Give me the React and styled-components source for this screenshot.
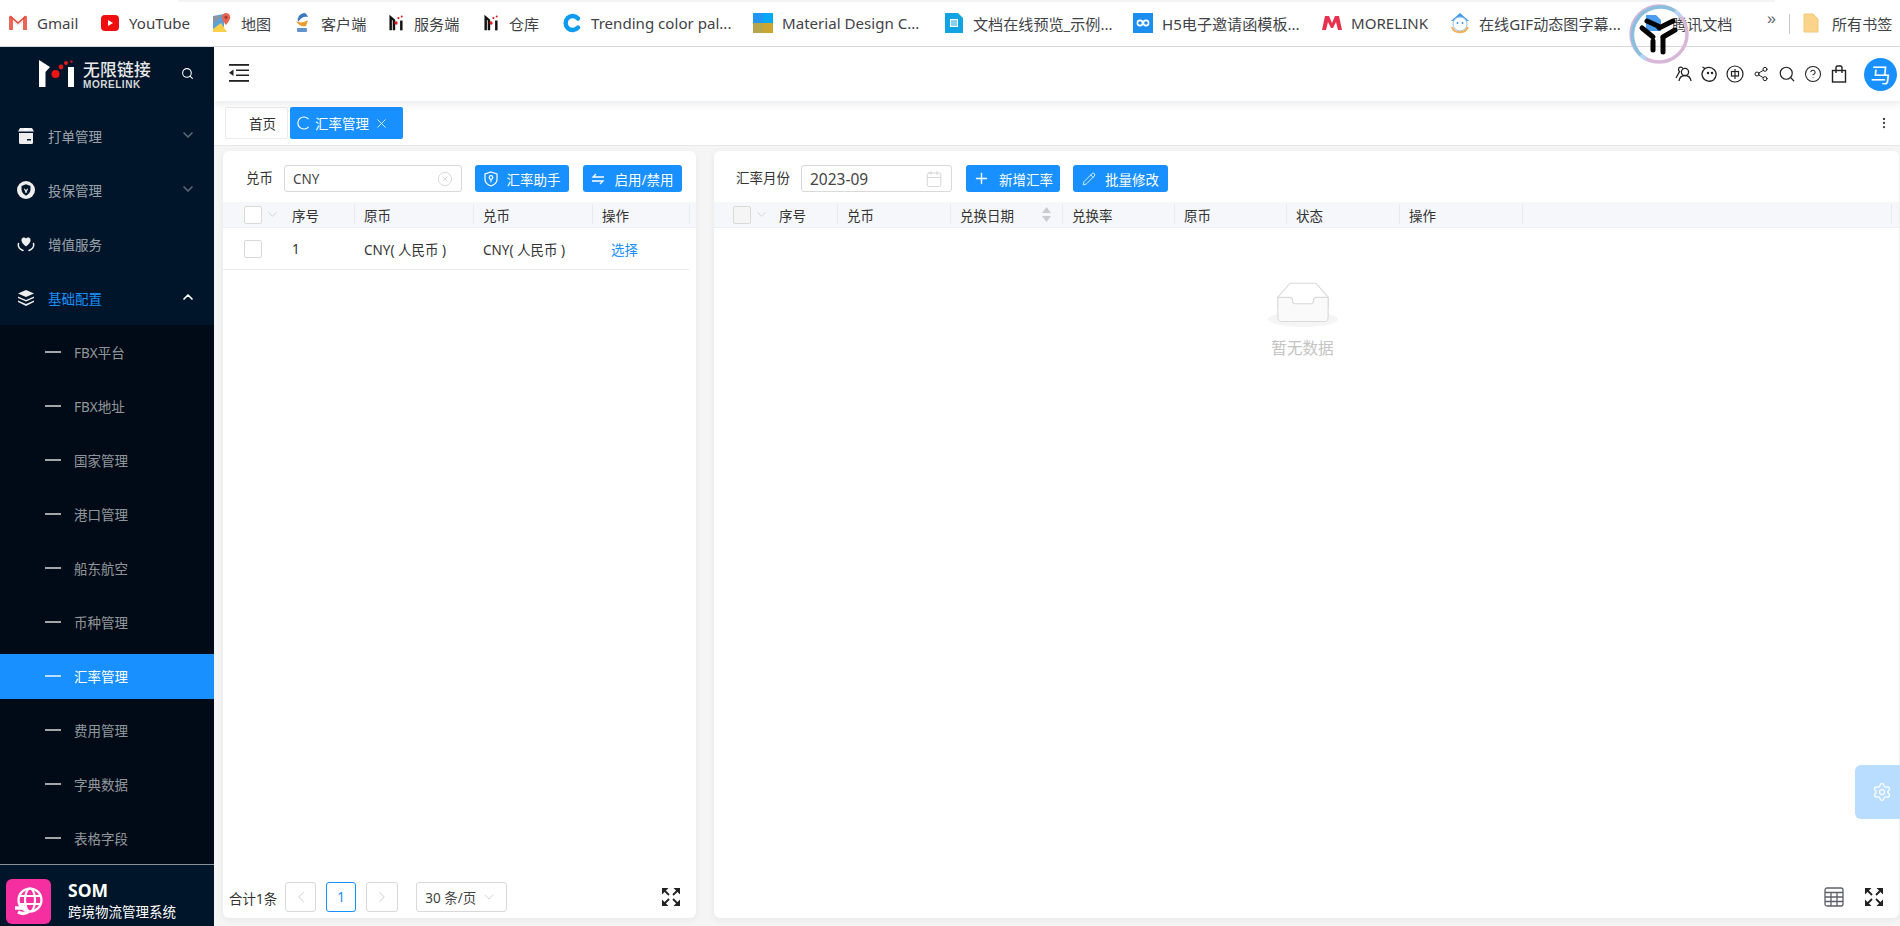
import React from 'react';
import styled, { createGlobalStyle } from 'styled-components';
import { Search, ChevronDown, ChevronUp, ChevronLeft, ChevronRight, X, Plus, Pencil, Calendar, Share2, CircleHelp, Settings, MoreVertical, XCircle } from 'lucide-react';

const FONT = `"Noto Sans", "Noto Sans CJK SC", sans-serif`;

const Global = createGlobalStyle`
  html, body { margin: 0; padding: 0; height: 100%; overflow: hidden; background: #fff; }
  #root { height: 100%; }
  * { box-sizing: border-box; }
  body { font-family: ${FONT}; font-size: 13.5px; color: #333; }
`;

const Page = styled.div`
  height: 926px; width: 1900px; display: flex; flex-direction: column; position: relative; overflow: hidden;
`;

/* ---------- bookmarks ---------- */
const BookmarkBar = styled.div`
  height: 47px; flex: none; display: flex; align-items: center; gap: 22px; padding: 0 0 0 8px;
  border-bottom: 1px solid #dadce0; background: #fff; position: relative;
  &::before { content: ''; position: absolute; left: 178px; width: 1597px; top: 0; height: 2px; background: #f1f3f4; border-radius: 0 0 6px 6px; }
`;
const Bookmark = styled.div`
  display: flex; align-items: center; gap: 9px; white-space: nowrap; font-size: 15.1px; color: #3f4347; flex: none;
  width: ${p => p.$w}px;
  svg { flex: none; }
`;
const Chevrons = styled.span`
  position: absolute; left: 1767px; top: 10px; font-size: 16px; color: #5f6368; font-family: "Liberation Sans", sans-serif;
`;
const BarDivider = styled.span`
  position: absolute; left: 1789px; top: 14px; height: 20px; width: 1px; background: #c7c9cc;
`;
const AllBookmarks = styled(Bookmark)`
  position: absolute; left: 1803px; top: 12px; gap: 13px;
`;
const FloatingRing = styled.svg`
  position: absolute; left: 1629px; top: 4px; z-index: 5;
`;

/* ---------- shell ---------- */
const Shell = styled.div`
  flex: 1; min-height: 0; display: flex;
`;
const Sidebar = styled.aside`
  width: 214px; flex: none; display: flex; flex-direction: column; background: #001529;
`;
const LogoRow = styled.div`
  height: 62px; flex: none; padding: 13px 0 0 39px; display: flex; align-items: flex-start; position: relative;
`;
const LogoText = styled.div`
  margin-left: 8px; display: flex; flex-direction: column; color: #e8e8e8;
`;
const LogoCn = styled.div`
  font-size: 16.8px; line-height: 18px; letter-spacing: 0.2px; font-weight: 500; font-family: "Noto Sans CJK SC", sans-serif;
`;
const LogoEn = styled.div`
  font-size: 10px; line-height: 11px; margin-top: 1px; font-weight: 700; letter-spacing: 0.55px; color: #d5d7da; font-family: "Liberation Sans", sans-serif;
`;
const LogoSearch = styled.span`
  position: absolute; left: 181px; top: 20px; color: #fff; display: flex;
`;
const MenuItem = styled.div`
  height: 54px; flex: none; display: flex; align-items: center; padding: 0 18px 0 17px; gap: 13px;
  color: ${p => (p.$active ? '#1890ff' : 'rgba(255,255,255,.62)')}; font-size: 13.5px;
`;
const MenuIcon = styled.span`
  width: 18px; height: 18px; display: flex; align-items: center; justify-content: center; flex: none;
`;
const MenuLabel = styled.span`
  flex: 1;
`;
const MenuArrow = styled.span`
  display: flex; color: ${p => (p.$open ? '#fff' : 'rgba(255,255,255,.35)')}; margin-top: -3px;
`;
const SubMenu = styled.div`
  flex: 1; min-height: 0; overflow: hidden; background: #000b17; padding-top: 5px; display: flex; flex-direction: column; gap: 9px;
`;
const SubItem = styled.div`
  height: 45px; flex: none; display: flex; align-items: center; padding: 0 0 2px 45px; gap: 13px; font-size: 13.5px;
  background: ${p => (p.$active ? '#1890ff' : 'transparent')};
  color: ${p => (p.$active ? '#fff' : 'rgba(255,255,255,.58)')};
`;
const Dash = styled.span`
  width: 16px; height: 2px; flex: none; background: ${p => (p.$active ? '#b9dcff' : '#a3a6a9')};
`;
const SideFooter = styled.div`
  height: 62px; flex: none; border-top: 1px solid #8b9096; display: flex; gap: 17px; padding: 14px 0 0 6px; background: #001529;
`;
const AppBadge = styled.div`
  width: 45px; height: 45px; border-radius: 6px; background: #f52f9f; display: flex; align-items: center; justify-content: center; flex: none;
`;
const AppText = styled.div`
  display: flex; flex-direction: column; color: #fff;
`;
const AppName = styled.div`
  font-size: 17.5px; font-weight: 700; line-height: 22px;
`;
const AppDesc = styled.div`
  font-size: 13.5px; line-height: 24px; margin-top: -1px;
`;

/* ---------- main ---------- */
const Main = styled.main`
  flex: 1; min-width: 0; display: flex; flex-direction: column; background: #f5f5f5;
`;
const TopBar = styled.header`
  height: 54px; flex: none; background: #fff; display: flex; align-items: center; padding: 0 3px 0 15px; position: relative; z-index: 1;
  box-shadow: 0 3px 8px rgba(0, 21, 41, 0.09);
`;
const ToggleWrap = styled.span`
  display: flex; margin-top: -2px;
`;
const Toolset = styled.div`
  margin-left: auto; display: flex; align-items: center; gap: 8px; color: #222; margin-right: 16px;
`;
const ToolIcon = styled.span`
  width: 18px; height: 18px; display: flex; align-items: center; justify-content: center;
`;
const Avatar = styled.div`
  width: 33px; height: 33px; border-radius: 50%; background: #1890ff; color: #fff; display: flex; align-items: center; justify-content: center; font-size: 20px; margin-top: 1px;
`;
const TabRow = styled.div`
  height: 45px; flex: none; background: #fff; border-bottom: 1px solid #e8e8e8; display: flex; align-items: flex-start; padding: 6px 10px 0 11px; gap: 2px;
`;
const HomeTab = styled.div`
  width: 63px; height: 32px; border: 1px solid #ececec; border-radius: 2px; display: flex; align-items: center; padding-left: 23px; color: #333;
`;
const ActiveTab = styled.div`
  width: 113px; height: 32px; background: #1890ff; border-radius: 2px; display: flex; align-items: center; padding: 0 7px; color: #fff; gap: 4px;
`;
const TabClose = styled.span`
  display: flex; margin-left: 1px;
`;
const TabMore = styled.span`
  margin-left: auto; display: flex; color: #444; margin-top: 9px; margin-right: -1px;
`;
const Content = styled.div`
  flex: 1; min-height: 0; display: flex; gap: 18px; padding: 5px 1px 8px 9px;
`;
const Panel = styled.section`
  width: ${p => (p.$w ? `${p.$w}px` : 'auto')}; flex: ${p => (p.$w ? 'none' : '1')}; min-width: 0;
  background: #fff; border-radius: 6px; box-shadow: 0 2px 7px rgba(0,0,0,.06); display: flex; flex-direction: column;
`;
const Toolbar = styled.div`
  height: 51px; flex: none; display: flex; align-items: flex-start; padding: 14px 0 0 ${p => p.$pad}px;
`;
const FieldLabel = styled.label`
  height: 27px; line-height: 27px; margin-right: 11px; color: #333; white-space: nowrap;
`;
const InputBox = styled.div`
  width: ${p => p.$w}px; height: 27px; border: 1px solid #d9d9d9; border-radius: 3px; display: flex; align-items: center; justify-content: space-between;
  padding: 0 8px 0 8px; font-size: ${p => p.$fs || 13.5}px; color: #444; margin-right: ${p => p.$mr}px;
  svg { color: #cfcfcf; }
`;
const ActionButton = styled.button`
  width: ${p => p.$w}px; height: 27px; border: 0; border-radius: 3px; background: #1890ff; color: #fff; font: inherit; font-size: 13.5px;
  display: flex; align-items: center; justify-content: center; gap: 9px; margin-right: ${p => p.$mr || 0}px; padding: 0;
`;
const TableHead = styled.div`
  height: 26px; flex: none; display: grid; grid-template-columns: ${p => p.$cols}; background: #f5f7fa; border-bottom: 1px solid #ebeef2; align-items: stretch;
`;
const HeadCell = styled.div`
  position: relative; display: flex; align-items: center; padding-left: ${p => (p.$bare ? 0 : 10)}px; color: #333; font-size: 13.5px; white-space: nowrap;
  ${p => p.$bare ? '' : `&::before { content: ''; position: absolute; left: 0; top: 2px; bottom: 3px; width: 1px; background: #e8eaee; }`}
`;
const SortedCell = styled(HeadCell)`
  justify-content: space-between; padding-right: 11px;
`;
const CheckCell = styled.div`
  display: flex; align-items: center; padding-left: ${p => p.$pad}px; gap: 3px; color: #c9c9c9;
`;
const CheckBox = styled.span`
  width: 18px; height: 18px; border: 1px solid #d9d9d9; border-radius: 2px; flex: none; background: ${p => (p.$off ? '#f5f5f5' : '#fff')};
`;
const TableRow = styled.div`
  height: 42px; flex: none; display: grid; grid-template-columns: ${p => p.$cols}; align-items: center; border-bottom: 1px solid #ebebeb; margin-right: 7px; color: #333;
`;
const RowCell = styled.div`
  padding-left: ${p => (p.$bare ? 0 : 10)}px; white-space: nowrap; font-size: 13.5px;
`;
const RowLink = styled.a`
  color: #1890ff; padding-left: 19px; font-size: 13.5px;
`;
const EmptyState = styled.div`
  width: 1177px; padding-top: 54px; display: flex; flex-direction: column; align-items: center;
`;
const EmptyText = styled.div`
  font-size: 15.6px; color: #c4c4c4; margin-top: 10px; line-height: 22px;
`;
const PanelFoot = styled.div`
  margin-top: auto; height: 36px; flex: none; display: flex; align-items: flex-start; padding: 0 15px 6px 6px;
`;
const Total = styled.span`
  line-height: 34px; margin-right: 8px; color: #333; white-space: nowrap;
`;
const PageBtn = styled.div`
  width: ${p => p.$w || 31}px; height: 30px; border: 1px solid ${p => (p.$on ? '#1890ff' : '#d9d9d9')}; border-radius: 3px; display: flex; align-items: center; justify-content: center;
  color: ${p => (p.$on ? '#1890ff' : '#c4c4c4')}; margin-right: 10px; background: #fff;
`;
const PageSelect = styled.div`
  width: 91px; height: 30px; border: 1px solid #d9d9d9; border-radius: 3px; margin-left: 8px; display: flex; align-items: center; gap: 5px; padding-left: 8px; color: #444;
  svg { color: #c4c4c4; }
`;
const FootIcons = styled.div`
  margin-left: auto; display: flex; gap: 20px; padding-top: 5px; color: #222;
`;
const GearTab = styled.div`
  position: absolute; right: 0; top: 765px; width: 45px; height: 54px; border-radius: 6px 0 0 6px; background: #b9ddff; display: flex; align-items: center; justify-content: center; color: #fff; padding-left: 9px; z-index: 3;
`;

/* ---------- drawings ---------- */
const IconM = ({ size = 18 }) => (
  <svg width={size} height={size} viewBox="0 0 20 22">
    <path d="M2 1 L9 7 V20 H6 V8 L5 7 V20 H2Z" fill="#111" />
    <rect x="15" y="8" width="3" height="12" fill="#111" />
    <circle cx="10" cy="11" r="2" fill="#e01818" />
    <circle cx="13" cy="5" r="1.3" fill="#e01818" />
    <circle cx="17" cy="3" r="1.2" fill="#e01818" />
  </svg>
);
const Bookmarks = [
  { t: 'Gmail', w: 70, i: <svg width="20" height="16" viewBox="0 0 20 16"><path d="M1 15V2l9 7 9-7v13h-4V7l-5 4-5-4v8z" fill="#e8e8e8" /><path d="M1 15V2.4C1 1 2.6.4 3.4 1.2L5 2.5V15z" fill="#e9665a" /><path d="M19 15V2.4C19 1 17.4.4 16.6 1.2L15 2.5V15z" fill="#e9665a" /><path d="M3 1l7 6 7-6 1 1-8 7-8-7z" fill="#ea4335" /></svg> },
  { t: 'YouTube', w: 90, i: <svg width="20" height="16" viewBox="0 0 20 16"><rect x="1" width="18" height="16" rx="4" fill="#f00f0f" /><path d="M8 5l5 3-5 3z" fill="#fff" /></svg> },
  { t: '地图', w: 58, i: <svg width="20" height="20" viewBox="0 0 20 20"><path d="M1 3l11-2v18H1z" fill="#5e9fd8" /><path d="M1 16l8-6 6 9H1z" fill="#fbd14b" /><path d="M1 3h8L1 11z" fill="#8a95a3" /><path d="M14 0a4.2 4.2 0 0 1 4.2 4.2C18.2 7 14 12 14 12S9.8 7 9.8 4.2A4.2 4.2 0 0 1 14 0z" fill="#e8664f" /><circle cx="14" cy="4.2" r="1.5" fill="#a33" /></svg> },
  { t: '客户端', w: 73, i: <svg width="20" height="22" viewBox="0 0 20 22"><path d="M12 1a7 7 0 0 0-6 9c3-5 7-6 10-5-1-2-2-4-4-4z" fill="#3c78c2" /><path d="M4 9c3 2 8 2 12-1l-2 6c-3 1-7 0-10-5z" fill="#ee9a2c" /><rect x="5" y="16" width="10" height="4" rx="1" fill="#3c78c2" opacity=".8" /></svg> },
  { t: '服务端', w: 73, i: <IconM /> },
  { t: '仓库', w: 58, i: <IconM /> },
  { t: 'Trending color pal...', w: 169, i: <svg width="20" height="20" viewBox="0 0 20 20"><path d="M16 5.5A7 7 0 1 0 16 14.5" fill="none" stroke="#0f9cf0" strokeWidth="4.4" strokeLinecap="round" /></svg> },
  { t: 'Material Design C...', w: 169, i: <svg width="20" height="20" viewBox="0 0 20 20"><rect width="10" height="10" fill="#2196f3" /><rect x="10" width="10" height="10" fill="#03a9f4" /><rect y="10" width="10" height="10" fill="#b5a54c" /><rect x="10" y="10" width="10" height="10" fill="#c9a632" /></svg> },
  { t: '文档在线预览_示例...', w: 167, i: <svg width="20" height="20" viewBox="0 0 20 20"><path d="M1 0h13l5 5v15H1z" fill="#12a3e3" /><path d="M6 6h8v8H6z" fill="#fff" /><path d="M7 8h6M7 10h6M7 12h6" stroke="#12a3e3" /></svg> },
  { t: 'H5电子邀请函模板...', w: 167, i: <svg width="20" height="20" viewBox="0 0 20 20"><rect width="20" height="20" fill="#1b8ef0" /><circle cx="7" cy="10" r="2.6" fill="none" stroke="#fff" strokeWidth="1.6" /><circle cx="13" cy="10" r="2.6" fill="none" stroke="#fff" strokeWidth="1.6" /></svg> },
  { t: 'MORELINK', w: 106, i: <svg width="20" height="16" viewBox="0 0 20 16"><path d="M0 15L3 1h4l3 7 3-7h4l3 14h-4l-2-8-3 6H9L6 7l-2 8z" fill="#e8304f" /></svg> },
  { t: '在线GIF动态图字幕...', w: 171, i: <svg width="20" height="22" viewBox="0 0 20 22"><path d="M10 1L1 9h18z" fill="#3f9ae8" /><circle cx="10" cy="12" r="7" fill="#fff" stroke="#8fc3ef" /><circle cx="7.5" cy="11" r="1" fill="#3f9ae8" /><circle cx="12.5" cy="11" r="1" fill="#3f9ae8" /><path d="M2 15c2 7 13 7 16 0" fill="none" stroke="#f2b25b" strokeWidth="2" /></svg> },
  { t: '腾讯文档', w: 88, i: <svg width="20" height="18" viewBox="0 0 20 18"><path d="M3 1h10l5 5v11H3z" fill="#4a9df0" /></svg> },
];
const Logo = () => (
  <svg width="36" height="28" viewBox="0 0 36 28">
    <path d="M0 0 L11 7 L6.500 12 V27 H0Z" fill="#fff" />
    <rect x="29" y="7" width="6" height="20" fill="#fff" />
    <circle cx="16.500" cy="14" r="4" fill="#f01414" />
    <circle cx="22" cy="7" r="2.400" fill="#e01818" />
    <circle cx="27" cy="3" r="2" fill="#e01818" />
    <circle cx="32.500" cy="1.600" r="1.200" fill="#e01818" />
  </svg>
);
const BoxIcon = () => (
  <svg width="16" height="16" viewBox="0 0 16 16" fill="#eee"><path d="M2 0h12l2 3.5H0z" /><path d="M1 5h14v9.5a1.5 1.5 0 0 1-1.5 1.5h-11A1.5 1.5 0 0 1 1 14.5z" /><path d="M9 11h4v1.5H9z" fill="#001529" /><path d="M6 0h4v2.5H6z" fill="#fff" /></svg>
);
const ShieldIcon = () => (
  <svg width="20" height="20" viewBox="0 0 20 20"><circle cx="10" cy="10" r="10" fill="#eee" /><path d="M10 3.5l5 2v4c0 3.5-2.5 5.5-5 6.8-2.5-1.3-5-3.3-5-6.8v-4z" fill="#001529" /><path d="M8 8l2 2 2-2v2l-1 1v2H9v-2l-1-1z" fill="#eee" /></svg>
);
const HeartIcon = () => (
  <svg width="18" height="18" viewBox="0 0 18 18" fill="none"><path d="M9 11.5S4.4 8.5 4.4 5A2.6 2.6 0 0 1 9 3.4 2.6 2.6 0 0 1 13.6 5c0 3.5-4.6 6.5-4.6 6.5z" fill="#eee" /><path d="M1.5 8.5c-.8 3 1 5.5 4.500 7M16.500 8.500c.8 3-1 5.500-4.500 7" stroke="#eee" strokeWidth="1.500" strokeLinecap="round" /></svg>
);
const LayersIcon = () => (
  <svg width="16" height="16" viewBox="0 0 16 16" fill="#eee"><path d="M8 0l8 3.500-8 3.500-8-3.500z" /><path d="M0 6.500l8 3.500 8-3.500V8l-8 3.500L0 8z" /><path d="M0 10.500L8 14l8-3.500V12l-8 4-8-4z" /></svg>
);
const ToggleIcon = () => (
  <svg width="20" height="18" viewBox="0 0 20 18" fill="#222"><rect width="20" height="1.800" /><rect x="7" y="5.500" width="13" height="1.500" /><rect x="7" y="10.500" width="13" height="1.500" /><rect y="16" width="20" height="1.800" /><path d="M4.500 5.500v6.500L0 8.800z" /></svg>
);
const ExpandIcon = () => (
  <svg width="20" height="20" viewBox="0 0 20 20" fill="#222" stroke="#222" strokeWidth="0">
    <path d="M1 1h6.500L1 7.500zM19 1v6.500L12.500 1zM1 19v-6.500L7.500 19zM19 19h-6.500l6.500-6.500z" />
    <path d="M3.500 3.500l4.500 4.500M16.500 3.500L12 8M3.500 16.500L8 12M16.500 16.500L12 12" strokeWidth="1.800" />
  </svg>
);
const GridIcon = () => (
  <svg width="20" height="20" viewBox="0 0 20 20" fill="none" stroke="#5d6068" strokeWidth="1.300"><rect x="1" y="1" width="18" height="18" rx="2" /><path d="M1 5.500h18M1 10h18M1 14.500h18M7 5.500V19M13 5.500V19" /></svg>
);
const SwapIcon = () => (
  <svg width="14" height="14" viewBox="0 0 14 14" fill="none" stroke="#fff" strokeWidth="1.300"><path d="M13 5H2l3-3" /><path d="M1 9h11l-3 3" /></svg>
);
const ShieldP = () => (
  <svg width="14" height="16" viewBox="0 0 14 16" fill="none" stroke="#fff" strokeWidth="1.200"><path d="M7 1l6 2v5.500c0 3-2.500 5.200-6 6.500-3.500-1.300-6-3.500-6-6.500V3z" /><circle cx="7" cy="6.500" r="1.800" /><path d="M7 8.300v3" /></svg>
);
const SortIcon = () => (
  <svg width="9" height="15" viewBox="0 0 9 15" fill="#c8ccd2"><path d="M4.500 0L9 6H0z" /><path d="M4.500 15L0 9h9z" /></svg>
);
const PersonIcon = () => (
  <svg width="18" height="18" viewBox="0 0 18 18" fill="none" stroke="#222" strokeWidth="1.300"><circle cx="11" cy="7" r="3.600" /><path d="M5 16c.5-3.500 3-5.500 6-5.500s5.500 2 6 5.500M9 3.500C7.500 1 4.500 2 4.500 4.500c0 1 .5 1.500 1 2L2 13" /></svg>
);
const FaceIcon = () => (
  <svg width="18" height="18" viewBox="0 0 18 18" fill="none" stroke="#222" strokeWidth="1.300"><path d="M5 3.500C2 6 1.500 9 2.500 11.500 4 16 10 17.500 13.500 15c3-2.500 3.500-7 1-10-2.500-2.500-6.500-3-9.500-1.500L2.500 2z" /><circle cx="8" cy="8" r=".6" fill="#222" /><circle cx="12" cy="8" r=".6" fill="#222" /></svg>
);
const ZhongIcon = () => (
  <svg width="18" height="18" viewBox="0 0 18 18" fill="none" stroke="#222" strokeWidth="1.200"><circle cx="9" cy="9" r="8" /><rect x="5.500" y="6.500" width="7" height="4.500" /><path d="M9 4v10" /></svg>
);
const BagIcon = () => (
  <svg width="16" height="18" viewBox="0 0 16 18" fill="none" stroke="#222" strokeWidth="1.400"><rect x="1.500" y="5.500" width="13" height="11.500" /><path d="M5 8V2.500A1.500 1.500 0 0 1 6.500 1h3A1.500 1.500 0 0 1 11 2.500V8" /></svg>
);
const SpinArc = () => (
  <svg width="14" height="14" viewBox="0 0 14 14" fill="none" stroke="#fff" strokeWidth="1.200"><path d="M11.500 3.200A6 6 0 1 0 11.500 10.800" /></svg>
);
const GlobeBadge = () => (
  <svg width="30" height="30" viewBox="0 0 30 30" fill="none" stroke="#fff" strokeWidth="2.200"><circle cx="16" cy="13" r="11.500" /><ellipse cx="16" cy="13" rx="5" ry="11.500" /><path d="M5 9h22M5 17h22" /><path d="M1 21h9l-2-3M15 24c-3 3-7 3-11 1" strokeWidth="3.400" /></svg>
);
const Ring = () => (
  <FloatingRing width="60" height="60" viewBox="0 0 60 60" fill="none">
    <circle cx="30" cy="30" r="28" stroke="#d8b7d8" strokeWidth="3.500" />
    <path d="M17 55 A28 28 0 0 1 46 7" stroke="#89bfdd" strokeWidth="3.500" />
    <path d="M46 7 A28 28 0 0 1 52 13" stroke="#b3d6f5" strokeWidth="3.500" />
    <path d="M12 51 A28 28 0 0 0 17 55" stroke="#b3d6f5" strokeWidth="3.500" />
    <g stroke="#050505" strokeWidth="5" strokeLinecap="round">
      <path d="M18 17l11 5" /><path d="M44 17l-14 7" /><path d="M13 24l11 9" /><path d="M46 26l-12 7" /><path d="M24 37v9" /><path d="M34 34v14" />
    </g>
  </FloatingRing>
);

const topMenu = [
  { label: '打单管理', icon: <BoxIcon /> },
  { label: '投保管理', icon: <ShieldIcon /> },
  { label: '增值服务', icon: <HeartIcon />, plain: true },
];
const subMenu = ['FBX平台', 'FBX地址', '国家管理', '港口管理', '船东航空', '币种管理', '汇率管理', '费用管理', '字典数据', '表格字段'];
const LEFT = '69px 62px 119px 119px 97px 7px';
const RIGHT = '65px 58px 113px 112px 112px 112px 113px 123px 369px 8px';
const leftRow = '69px 62px 119px 119px 97px';

export default function App() {
  return (
    <Page>
      <Global />
      <BookmarkBar>
        {Bookmarks.map(b => <Bookmark key={b.t} $w={b.w}>{b.i}<span>{b.t}</span></Bookmark>)}
        <Chevrons>»</Chevrons>
        <BarDivider />
        <AllBookmarks>
          <svg width="16" height="20" viewBox="0 0 16 20"><path d="M1 1h9l5 5v13H1z" fill="#fad48b" stroke="#f5c878" /></svg>
          <span>所有书签</span>
        </AllBookmarks>
      </BookmarkBar>
      <Ring />
      <Shell>
        <Sidebar>
          <LogoRow>
            <Logo />
            <LogoText>
              <LogoCn>无限链接</LogoCn>
              <LogoEn>MORELINK</LogoEn>
            </LogoText>
            <LogoSearch><Search size={13} /></LogoSearch>
          </LogoRow>
          {topMenu.map(m => (
            <MenuItem key={m.label}>
              <MenuIcon>{m.icon}</MenuIcon>
              <MenuLabel>{m.label}</MenuLabel>
              {!m.plain && <MenuArrow><ChevronDown size={16} strokeWidth={2.6} /></MenuArrow>}
            </MenuItem>
          ))}
          <MenuItem $active>
            <MenuIcon><LayersIcon /></MenuIcon>
            <MenuLabel>基础配置</MenuLabel>
            <MenuArrow $open><ChevronUp size={16} strokeWidth={2.6} /></MenuArrow>
          </MenuItem>
          <SubMenu>
            {subMenu.map(s => (
              <SubItem key={s} $active={s === '汇率管理'}><Dash $active={s === '汇率管理'} />{s}</SubItem>
            ))}
          </SubMenu>
          <SideFooter>
            <AppBadge><GlobeBadge /></AppBadge>
            <AppText>
              <AppName>SOM</AppName>
              <AppDesc>跨境物流管理系统</AppDesc>
            </AppText>
          </SideFooter>
        </Sidebar>
        <Main>
          <TopBar>
            <ToggleWrap><ToggleIcon /></ToggleWrap>
            <Toolset>
              <ToolIcon><PersonIcon /></ToolIcon>
              <ToolIcon><FaceIcon /></ToolIcon>
              <ToolIcon><ZhongIcon /></ToolIcon>
              <ToolIcon><Share2 size={16} strokeWidth={1.5} /></ToolIcon>
              <ToolIcon><Search size={18} strokeWidth={1.6} /></ToolIcon>
              <ToolIcon><CircleHelp size={18} strokeWidth={1.4} /></ToolIcon>
              <ToolIcon><BagIcon /></ToolIcon>
            </Toolset>
            <Avatar>马</Avatar>
          </TopBar>
          <TabRow>
            <HomeTab>首页</HomeTab>
            <ActiveTab>
              <SpinArc />
              <span>汇率管理</span>
              <TabClose><X size={15} strokeWidth={1.3} /></TabClose>
            </ActiveTab>
            <TabMore><MoreVertical size={14} /></TabMore>
          </TabRow>
          <Content>
            <Panel $w={473}>
              <Toolbar $pad={23}>
                <FieldLabel>兑币</FieldLabel>
                <InputBox $w={178} $mr={13}>CNY<XCircle size={16} strokeWidth={1.2} /></InputBox>
                <ActionButton $w={94} $mr={14}><ShieldP />汇率助手</ActionButton>
                <ActionButton $w={99}><SwapIcon />启用/禁用</ActionButton>
              </Toolbar>
              <TableHead $cols={LEFT}>
                <CheckCell $pad={21}><CheckBox /><ChevronDown size={15} strokeWidth={1.2} /></CheckCell>
                <HeadCell $bare>序号</HeadCell>
                <HeadCell>原币</HeadCell>
                <HeadCell>兑币</HeadCell>
                <HeadCell>操作</HeadCell>
                <HeadCell />
              </TableHead>
              <TableRow $cols={leftRow}>
                <CheckCell $pad={21}><CheckBox /></CheckCell>
                <RowCell $bare>1</RowCell>
                <RowCell>CNY( 人民币 )</RowCell>
                <RowCell>CNY( 人民币 )</RowCell>
                <RowLink>选择</RowLink>
              </TableRow>
              <PanelFoot>
                <Total>合计1条</Total>
                <PageBtn><ChevronLeft size={18} strokeWidth={1.1} /></PageBtn>
                <PageBtn $w={30} $on>1</PageBtn>
                <PageBtn $w={32}><ChevronRight size={18} strokeWidth={1.1} /></PageBtn>
                <PageSelect>30 条/页<ChevronDown size={16} strokeWidth={1.1} /></PageSelect>
                <FootIcons><ExpandIcon /></FootIcons>
              </PanelFoot>
            </Panel>
            <Panel>
              <Toolbar $pad={22}>
                <FieldLabel>汇率月份</FieldLabel>
                <InputBox $w={151} $mr={14} $fs={15.5}>2023-09<Calendar size={18} strokeWidth={1.1} /></InputBox>
                <ActionButton $w={94} $mr={13}><Plus size={17} strokeWidth={2} />新增汇率</ActionButton>
                <ActionButton $w={95}><Pencil size={14} strokeWidth={1.4} />批量修改</ActionButton>
              </Toolbar>
              <TableHead $cols={RIGHT}>
                <CheckCell $pad={19}><CheckBox $off /><ChevronDown size={15} strokeWidth={1.2} /></CheckCell>
                <HeadCell $bare>序号</HeadCell>
                <HeadCell>兑币</HeadCell>
                <SortedCell>兑换日期<SortIcon /></SortedCell>
                <HeadCell>兑换率</HeadCell>
                <HeadCell>原币</HeadCell>
                <HeadCell>状态</HeadCell>
                <HeadCell>操作</HeadCell>
                <HeadCell />
                <HeadCell />
              </TableHead>
              <EmptyState>
                <svg width="70" height="45" viewBox="0 0 64 41">
                  <g transform="translate(0 1)" fill="none" fillRule="evenodd">
                    <ellipse fill="#f5f5f5" cx="32" cy="33" rx="32" ry="7" />
                    <g fillRule="nonzero" stroke="#d9d9d9">
                      <path d="M55 12.76L44.854 1.258C44.367.474 43.656 0 42.907 0H21.093c-.749 0-1.46.474-1.947 1.257L9 12.761V22h46v-9.24z" />
                      <path d="M41.613 15.931c0-1.605.994-2.93 2.227-2.931H55v18.137C55 33.26 53.68 35 52.05 35h-40.1C10.32 35 9 33.259 9 31.137V13h11.16c1.233 0 2.227 1.323 2.227 2.928v.022c0 1.605 1.005 2.901 2.237 2.901h14.752c1.232 0 2.237-1.308 2.237-2.913v-.007z" fill="#fafafa" />
                    </g>
                  </g>
                </svg>
                <EmptyText>暂无数据</EmptyText>
              </EmptyState>
              <PanelFoot>
                <FootIcons><GridIcon /><ExpandIcon /></FootIcons>
              </PanelFoot>
            </Panel>
          </Content>
        </Main>
      </Shell>
      <GearTab><Settings size={20} strokeWidth={1.5} /></GearTab>
    </Page>
  );
}
